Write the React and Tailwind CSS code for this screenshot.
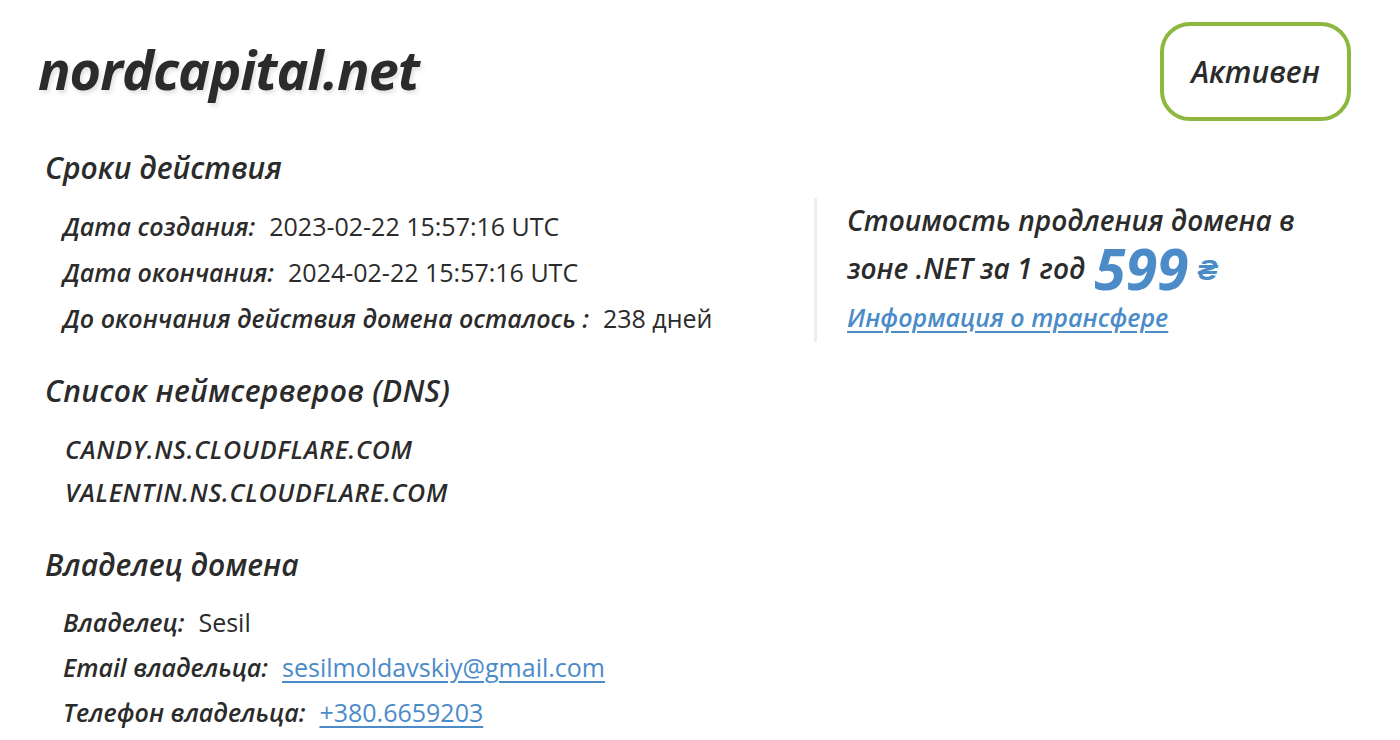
import React from 'react';

const Row = ({ label, children }) => (
  <div className="h-[46px] flex items-center gap-[14px]">
    <span className="italic font-semibold">{label}</span>
    <span className="font-normal not-italic">{children}</span>
  </div>
);

const App = () => {
  return (
    <div className="min-h-screen w-full bg-white text-[#2b2b2b] font-['Open_Sans',sans-serif] pl-[38px] pr-[49px]">
      <div className="pt-[22px] flex items-center justify-between">
        <h1 className="text-[54px] font-bold italic leading-none tracking-[-1px] -mt-[6px] [text-shadow:2px_3px_4px_rgba(0,0,0,0.12)]">
          nordcapital.net
        </h1>
        <div className="h-[99px] w-[191px] rounded-[30px] border-[4px] border-[#8db73f] flex items-center justify-center text-[30px] italic font-semibold">
          Активен
        </div>
      </div>

      <div className="mt-[23px] flex">
        <div className="w-[776px] pl-[7px]">
          {/* сроки */}
          <h2 className="h-[46px] flex items-center text-[30px] italic font-semibold">Сроки действия</h2>
          <div className="mt-[14px] pl-[18px] text-[25px]">
            <Row label="Дата создания:">2023-02-22 15:57:16 UTC</Row>
            <Row label="Дата окончания:">2024-02-22 15:57:16 UTC</Row>
            <Row label="До окончания действия домена осталось :">238 дней</Row>
          </div>

          {/* dns */}
          <h2 className="mt-[25px] h-[46px] flex items-center text-[30px] italic font-semibold tracking-[0.3px]">Список неймсерверов (DNS)</h2>
          <div className="mt-[15px] pl-[20px] text-[25px] italic font-semibold tracking-[0.7px]">
            <div className="h-[43px] flex items-center">CANDY.NS.CLOUDFLARE.COM</div>
            <div className="h-[43px] flex items-center">VALENTIN.NS.CLOUDFLARE.COM</div>
          </div>

          {/* owner */}
          <h2 className="mt-[27px] h-[46px] flex items-center text-[30px] italic font-semibold">Владелец домена</h2>
          <div className="mt-[13px] pl-[18px] text-[25px]">
            <div className="h-[45px] flex items-center gap-[14px]">
              <span className="italic font-semibold">Владелец:</span>
              <span>Sesil</span>
            </div>
            <div className="h-[45px] flex items-center gap-[14px]">
              <span className="italic font-semibold">Email владельца:</span>
              <a href="#" className="text-[#4b8bc8] underline underline-offset-4">sesilmoldavskiy@gmail.com</a>
            </div>
            <div className="h-[45px] flex items-center gap-[14px]">
              <span className="italic font-semibold">Телефон владельца:</span>
              <a href="#" className="text-[#4b8bc8] underline underline-offset-4">+380.6659203</a>
            </div>
          </div>
        </div>

        <div className="self-start mt-[54px] border-l-[3px] border-[#eeeeee] pl-[30px] italic font-semibold">
          <div className="h-[44px] flex items-center text-[28px]">Стоимость продления домена в</div>
          <div className="h-[52px] flex items-center text-[28px] gap-[9px]">
            <span>зоне .NET за 1 год</span>
            <span className="text-[#4b8bc8] text-[57px] font-bold leading-[48px]">599</span>
            <span className="text-[#4b8bc8] text-[30px] font-bold">₴</span>
          </div>
          <div className="h-[48px] flex items-center">
            <a href="#" className="text-[25px] text-[#4b8bc8] underline underline-offset-4">Информация о трансфере</a>
          </div>
        </div>
      </div>
    </div>
  );
};

export default App;
